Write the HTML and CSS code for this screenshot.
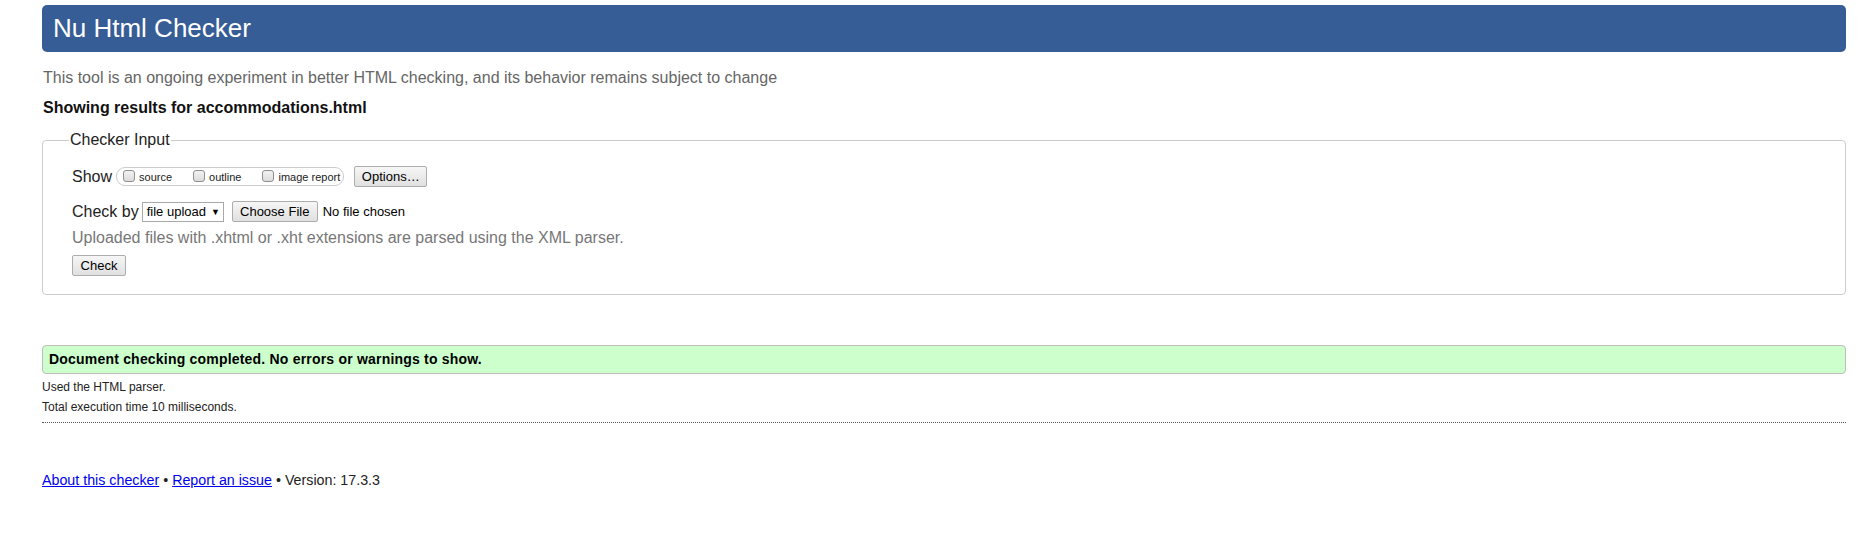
FILE: index.html
```html
<!DOCTYPE html>
<html lang="en">
<head>
<meta charset="utf-8">
<title>Nu Html Checker</title>
<link rel="stylesheet" href="styles.css">
</head>
<body>
<div class="page">
  <h1 class="title">Nu Html Checker</h1>
  <p class="subtitle">This tool is an ongoing experiment in better HTML checking, and its behavior remains subject to change</p>
  <p class="showing">Showing results for accommodations.html</p>

  <fieldset class="input-box">
    <legend class="legend">Checker Input</legend>
    <div class="row show-row">
      <span class="row-label">Show</span>
      <span class="toggles">
        <label class="toggle"><span class="cb"></span>source</label>
        <label class="toggle"><span class="cb"></span>outline</label>
        <label class="toggle"><span class="cb"></span>image report</label>
      </span>
      <span class="btn btn-options">Options…</span>
    </div>
    <div class="row check-row">
      <span class="row-label">Check by</span>
      <span class="select">file upload <span class="arrow">▼</span></span>
      <span class="btn btn-file">Choose File</span>
      <span class="nofile">No file chosen</span>
    </div>
    <p class="hint">Uploaded files with .xhtml or .xht extensions are parsed using the XML parser.</p>
    <div class="row submit-row">
      <span class="btn btn-check">Check</span>
    </div>
  </fieldset>

  <p class="success">Document checking completed. No errors or warnings to show.</p>
  <div class="details">
    <p class="detail">Used the HTML parser.</p>
    <p class="detail">Total execution time 10 milliseconds.</p>
  </div>

  <p class="footer"><a href="#">About this checker</a> • <a href="#">Report an issue</a> • Version: 17.3.3</p>
</div>
</body>
</html>
```

FILE: styles.css
```css
* { box-sizing: border-box; }

html, body {
  margin: 0;
  padding: 0;
  background: #fff;
}

body {
  font-family: "Liberation Sans", Arial, sans-serif;
  color: #222;
}

.page {
  margin: 0 17px 0 42px;
  padding-top: 5px;
}

.title {
  margin: 0;
  height: 47px;
  padding-left: 11px;
  background: #365d95;
  color: #fff;
  font-weight: normal;
  font-size: 26px;
  line-height: 47px;
  border-radius: 5px;
}

.subtitle {
  margin: 17px 0 0 1px;
  font-size: 16px;
  line-height: 18px;
  color: #666;
}

.showing {
  margin: 12px 0 0 1px;
  font-size: 16px;
  line-height: 18px;
  font-weight: bold;
  color: #111;
}

.input-box {
  margin: 14px 0 0 0;
  padding: 4px 10px 18px 29px;
  border: 1px solid #ccc;
  border-radius: 4px;
  min-width: 0;
}

.legend {
  padding: 0 1px;
  margin-left: -3px;
  font-size: 16px;
  line-height: 18px;
  color: #222;
}

.row {
  display: flex;
  align-items: center;
}

.row-label {
  font-size: 16px;
  line-height: 18px;
  color: #222;
}

.show-row {
  height: 21px;
  margin-top: 13px;
}

.toggles {
  display: flex;
  align-items: center;
  height: 19px;
  margin-left: 4px;
  padding: 0 3px 0 6px;
  border: 1px solid #ccc;
  border-radius: 9px;
  gap: 21px;
}

.toggle {
  display: flex;
  align-items: center;
  gap: 4px;
  font-size: 11px;
  line-height: 13px;
  color: #222;
  padding-top: 2px;
}

.cb {
  display: inline-block;
  width: 12px;
  height: 12px;
  margin-top: -4px;
  border: 1px solid #8f8f8f;
  border-radius: 3px;
  background: linear-gradient(#f2f2f2, #dcdcdc);
}

.btn {
  display: inline-flex;
  align-items: center;
  justify-content: center;
  height: 21px;
  padding: 0 6px;
  font-size: 13px;
  color: #000;
  border: 1px solid #adadad;
  border-radius: 2px;
  background: linear-gradient(#f6f6f6, #e0e0e0);
}

.btn-options {
  margin-left: 10px;
  width: 73px;
}

.check-row {
  height: 21px;
  margin-top: 14px;
}

.select {
  display: inline-flex;
  align-items: center;
  height: 20px;
  width: 82px;
  margin-left: 3px;
  padding: 0 0 0 4px;
  border: 1px solid #a9a9a9;
  font-size: 13px;
  color: #000;
  background: #fff;
  gap: 5px;
}

.arrow {
  font-size: 9px;
}

.btn-file {
  margin-left: 8px;
  width: 86px;
  height: 21px;
}

.nofile {
  margin-left: 5px;
  font-size: 13px;
  color: #000;
}

.hint {
  margin: 7px 0 0 0;
  font-size: 16px;
  line-height: 18px;
  color: #777;
}

.submit-row {
  margin-top: 8px;
}

.btn-check {
  width: 54px;
  height: 21px;
}

.success {
  margin: 50px 0 0 0;
  height: 29px;
  padding: 0 0 0 6px;
  background: #ccffcc;
  border: 1px solid #bfbfbf;
  border-radius: 4px;
  font-size: 14px;
  font-weight: bold;
  line-height: 27px;
  letter-spacing: 0.2px;
  color: #000;
}

.details {
  margin-top: 3px;
  padding-bottom: 5px;
  border-bottom: 1px dotted #555;
}

.detail {
  margin: 0;
  font-size: 12px;
  line-height: 20px;
  color: #222;
}

.footer {
  margin: 49px 0 0 0;
  font-size: 14.25px;
  line-height: 16px;
  color: #222;
}

.footer a {
  color: #0000ee;
}
```
